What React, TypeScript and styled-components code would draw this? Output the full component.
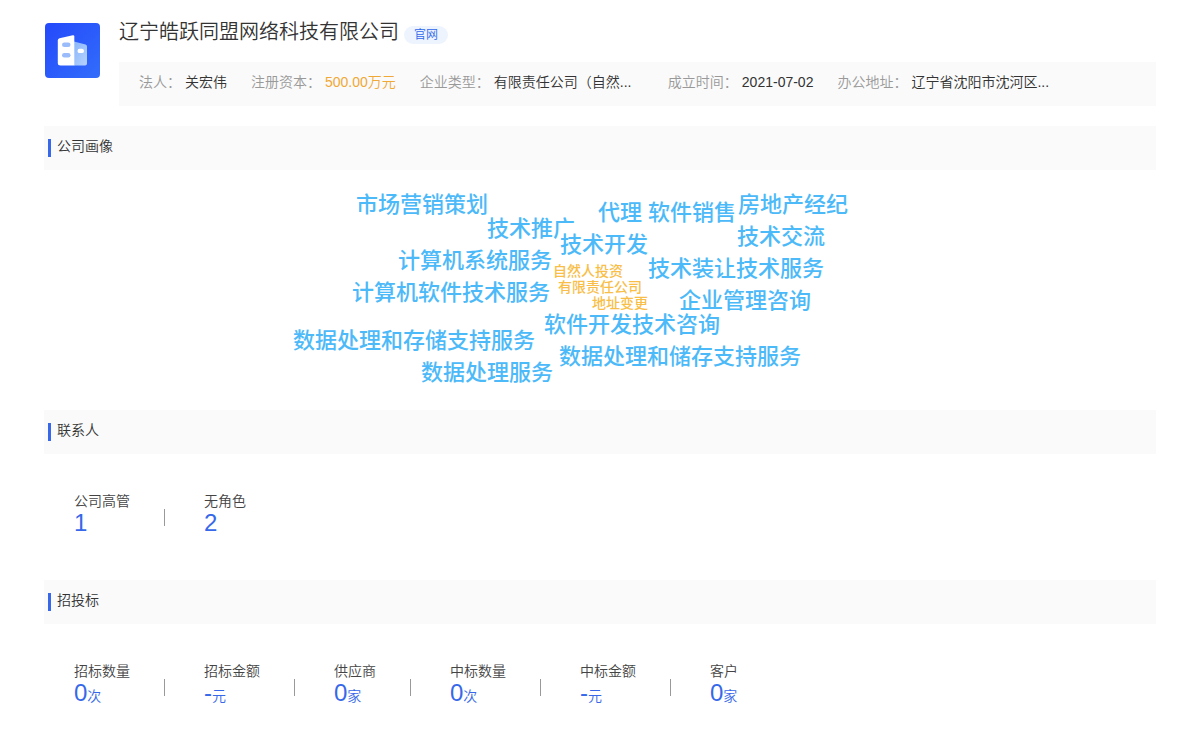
import React from 'react';
import styled, { createGlobalStyle } from 'styled-components';

const GlobalStyle = createGlobalStyle`
  *, *::before, *::after { box-sizing: border-box; }
  body {
    margin: 0;
    background: #fff;
    color: #444;
    font-family: "Liberation Sans", "Noto Sans CJK SC", sans-serif;
    font-size: 14px;
    line-height: 20px;
  }
  h1, h2, p, dl, dt, dd { margin: 0; font-weight: 350; }
`;

const Page = styled.main`
  padding: 20px 44px;
`;

const Header = styled.header`
  display: flex;
  gap: 19px;
  padding-left: 1px;
  margin-bottom: 20px;
`;

const Logo = styled.svg`
  flex: none;
  width: 55px;
  height: 55px;
  margin-top: 3px;
`;

const HeaderBody = styled.div`
  flex: 1;
  min-width: 0;
`;

const TitleRow = styled.div`
  display: flex;
  align-items: flex-end;
  gap: 5px;
  height: 24px;
  margin-bottom: 18px;
`;

const CompanyName = styled.h1`
  color: #333;
  font-size: 20px;
  line-height: 24px;
`;

const SiteLink = styled.a`
  height: 18px;
  padding: 0 10px;
  border-radius: 9px;
  background: #eef4fe;
  color: #2e67ec;
  font-size: 12px;
  font-weight: 350;
  line-height: 18px;
  text-decoration: none;
`;

const InfoBar = styled.dl`
  display: flex;
  flex-wrap: wrap;
  column-gap: 24px;
  padding: 10px 20px 14px;
  background: #fafafa;
`;

const InfoItem = styled.div`
  display: flex;
  gap: 4px;
  white-space: nowrap;
`;

const InfoLabel = styled.dt`
  color: #999;
`;

const InfoValue = styled.dd<{ $accent?: boolean; $wide?: boolean }>`
  width: ${(p) => (p.$wide ? '150px' : 'auto')};
  color: ${(p) => (p.$accent ? '#f0a836' : '#333')};
`;

const SectionBar = styled.div`
  display: flex;
  align-items: center;
  gap: 6px;
  height: 44px;
  padding: 0 4px;
  background: #fafafa;

  &::before {
    content: "";
    width: 3px;
    height: 18px;
    background: #3768ea;
  }
`;

const SectionTitle = styled.h2`
  padding-bottom: 4px;
  color: #333;
  font-size: 14px;
  line-height: 20px;
`;

const Cloud = styled.div`
  position: relative;
  width: 640px;
  height: 240px;
  margin: 0 auto;
`;

const Word = styled.span<{ $x: number; $y: number; $minor?: boolean }>`
  position: absolute;
  left: ${(p) => p.$x}px;
  top: ${(p) => p.$y}px;
  color: ${(p) => (p.$minor ? '#f8be48' : '#4cb9f8')};
  font-size: ${(p) => (p.$minor ? 14 : 22)}px;
  font-weight: 500;
  line-height: ${(p) => (p.$minor ? 14 : 26)}px;
  white-space: nowrap;
`;

const Stats = styled.dl`
  display: flex;
  flex-wrap: wrap;
  padding: 36px 30px 46px;
`;

const Stat = styled.div`
  display: flex;
  flex-direction: column;
  position: relative;

  & + & {
    margin-left: 74px;
  }

  & + &::before {
    content: "";
    position: absolute;
    left: -40px;
    top: 19px;
    width: 1px;
    height: 17px;
    background: #999;
  }
`;

const StatLabel = styled.dt`
  color: #444;
  line-height: 22px;
`;

const StatValue = styled.dd`
  color: #3768ea;
  font-size: 24px;
  line-height: 22px;
`;

const Unit = styled.span`
  font-size: 14px;
`;

const info = [
  { label: '法人：', value: '关宏伟' },
  { label: '注册资本：', value: '500.00万元', accent: true },
  { label: '企业类型：', value: '有限责任公司（自然...', wide: true },
  { label: '成立时间：', value: '2021-07-02' },
  { label: '办公地址：', value: '辽宁省沈阳市沈河区...', wide: true },
];

const words = [
  { text: '市场营销策划', x: 76, y: 22 },
  { text: '技术推广', x: 207, y: 46 },
  { text: '代理', x: 318, y: 30 },
  { text: '软件销售', x: 368, y: 30 },
  { text: '房地产经纪', x: 458, y: 22 },
  { text: '技术开发', x: 280, y: 62 },
  { text: '技术交流', x: 457, y: 54 },
  { text: '计算机系统服务', x: 118, y: 78 },
  { text: '技术装让技术服务', x: 368, y: 86 },
  { text: '自然人投资', x: 273, y: 94, minor: true },
  { text: '有限责任公司', x: 278, y: 110, minor: true },
  { text: '地址变更', x: 312, y: 126, minor: true },
  { text: '计算机软件技术服务', x: 72, y: 110 },
  { text: '企业管理咨询', x: 399, y: 118 },
  { text: '软件开发技术咨询', x: 264, y: 142 },
  { text: '数据处理和存储支持服务', x: 13, y: 158 },
  { text: '数据处理和储存支持服务', x: 279, y: 174 },
  { text: '数据处理服务', x: 141, y: 190 },
];

type StatData = { label: string; value: string; unit?: string };

const contacts: StatData[] = [
  { label: '公司高管', value: '1' },
  { label: '无角色', value: '2' },
];

const bids: StatData[] = [
  { label: '招标数量', value: '0', unit: '次' },
  { label: '招标金额', value: '-', unit: '元' },
  { label: '供应商', value: '0', unit: '家' },
  { label: '中标数量', value: '0', unit: '次' },
  { label: '中标金额', value: '-', unit: '元' },
  { label: '客户', value: '0', unit: '家' },
];

function StatList({ items }: { items: StatData[] }) {
  return (
    <Stats>
      {items.map((s) => (
        <Stat key={s.label}>
          <StatLabel>{s.label}</StatLabel>
          <StatValue>
            {s.value}
            {s.unit && <Unit>{s.unit}</Unit>}
          </StatValue>
        </Stat>
      ))}
    </Stats>
  );
}

function Section({ title, children }: { title: string; children: React.ReactNode }) {
  return (
    <section>
      <SectionBar>
        <SectionTitle>{title}</SectionTitle>
      </SectionBar>
      {children}
    </section>
  );
}

function CompanyLogo() {
  return (
    <Logo viewBox="0 0 55 55" aria-hidden="true">
      <defs>
        <linearGradient id="logoBg" x1="0" y1="0" x2="1" y2="1">
          <stop offset="0" stopColor="#2449fb" />
          <stop offset="1" stopColor="#326dfb" />
        </linearGradient>
        <linearGradient id="logoSide" x1="0" y1="0" x2="1" y2="1">
          <stop offset="0" stopColor="#8bb6fb" />
          <stop offset="1" stopColor="#b4d2fd" />
        </linearGradient>
      </defs>
      <rect width="55" height="55" rx="4" fill="url(#logoBg)" />
      <path d="M29 18.500L40.500 21.600Q42 22 42 23.600V40.500Q42 42.500 40 42.500H29Z" fill="url(#logoSide)" />
      <path d="M14.500 15.300L27.800 12.200Q29.300 11.900 29.300 13.400V42.500H15.500Q12.800 42.500 12.800 40V17.400Q12.800 15.700 14.500 15.300Z" fill="#fff" />
      <rect x="17" y="19.500" width="8.500" height="4.600" rx="2.300" fill="#9bbcfa" />
      <rect x="17" y="30" width="8.500" height="4.600" rx="2.300" fill="#9bbcfa" />
      <rect x="32.500" y="25.700" width="6.500" height="4.400" rx="2.200" fill="#fff" />
    </Logo>
  );
}

export default function App() {
  return (
    <>
      <GlobalStyle />
      <Page>
        <Header>
          <CompanyLogo />
          <HeaderBody>
            <TitleRow>
              <CompanyName>辽宁皓跃同盟网络科技有限公司</CompanyName>
              <SiteLink href="#">官网</SiteLink>
            </TitleRow>
            <InfoBar>
              {info.map((i) => (
                <InfoItem key={i.label}>
                  <InfoLabel>{i.label}</InfoLabel>
                  <InfoValue $accent={i.accent} $wide={i.wide}>{i.value}</InfoValue>
                </InfoItem>
              ))}
            </InfoBar>
          </HeaderBody>
        </Header>
        <Section title="公司画像">
          <Cloud>
            {words.map((w) => (
              <Word key={w.text} $x={w.x} $y={w.y} $minor={w.minor}>{w.text}</Word>
            ))}
          </Cloud>
        </Section>
        <Section title="联系人">
          <StatList items={contacts} />
        </Section>
        <Section title="招投标">
          <StatList items={bids} />
        </Section>
      </Page>
    </>
  );
}
